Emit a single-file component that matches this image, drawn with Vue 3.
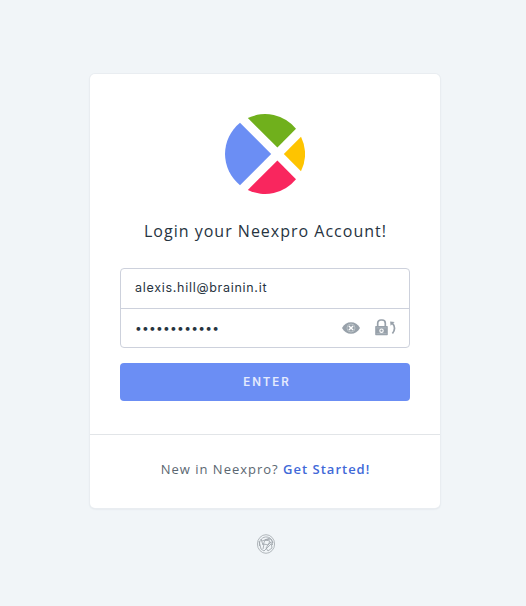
<script setup>
const email = 'alexis.hill@brainin.it'
const mask = '•'.repeat(12)
</script>

<template>
  <main class="page">
    <section class="card">
      <svg class="logo" viewBox="0 0 80 80" aria-hidden="true">
        <path fill="#6b8ef4" d="M15 8.8 46.2 40 15 71.2A40 40 0 0 1 15 8.8Z" />
        <path fill="#70b01c" d="M22.8 4A40 40 0 0 1 71 14.8L52.4 33.6Z" />
        <path fill="#fec400" d="M58.8 40 76 22.8A40 40 0 0 1 76 57.2Z" />
        <path fill="#f9265e" d="M52.4 46.4 71 65.2A40 40 0 0 1 22.8 76Z" />
      </svg>
      <h1 class="title">Login your Neexpro Account!</h1>
      <form class="form">
        <div class="fields">
          <div class="field"><span class="email">{{ email }}</span></div>
          <div class="field">
            <span class="mask">{{ mask }}</span>
            <svg class="eye" viewBox="0 0 18 12" aria-hidden="true">
              <path fill="#98a1aa" d="M0 6C2 2.2 5.2.2 9 .2S16 2.2 18 6C16 9.8 12.8 11.8 9 11.8S2 9.8 0 6Z" />
              <circle cx="9" cy="6" r="4" fill="none" stroke="#c3cace" stroke-width=".8" />
              <path d="m6.9 3.9 4.2 4.2m0-4.2-4.2 4.2" stroke="#fff" stroke-width="1.4" />
            </svg>
            <svg class="lock" viewBox="0 0 22 17" aria-hidden="true">
              <path d="M2.7 8V4.2a3.2 3.2 0 0 1 3.2-3.2h1.2a3.2 3.2 0 0 1 3.2 3.2V8" fill="none" stroke="#98a1aa" stroke-width="1.7" />
              <rect x=".2" y="7" width="12.6" height="9.2" rx=".7" fill="#98a1aa" />
              <path d="M1.5 8.9h10M1.5 14.6h10" stroke="#bbc3c9" stroke-width=".6" />
              <circle cx="6.5" cy="11.7" r="1.7" fill="#98a1aa" stroke="#fff" stroke-width="1.1" />
              <path d="M17.2 4.2c2.8 2.8 2.9 6.7.2 10.2" fill="none" stroke="#98a1aa" stroke-width="1.7" />
              <path d="m15.1 2.5 4.5.4-4 3.9Z" fill="#98a1aa" />
            </svg>
          </div>
        </div>
        <button class="enter" type="button">ENTER</button>
      </form>
      <footer class="footer">
        <span>New in Neexpro? <a class="link">Get Started!</a></span>
      </footer>
    </section>
    <svg class="emblem" viewBox="0 0 20 20" aria-hidden="true">
      <g fill="none" stroke="#9ba1a7" stroke-width=".8">
        <ellipse cx="10" cy="10" rx="8.6" ry="9.3" stroke="#a1a7ac" />
        <path d="M3.5 12C2.5 6 7 2.5 11 3s6 4 5.5 8M3 7 5 15l3 2M5 5l2 6 2-5 5 1-2 4-4-1-1 5M9 6l6-1 2 4M12 11l3-3 1 6-4 3-2-3 2-3M14 4 6 7M8 17l7-7" />
      </g>
    </svg>
  </main>
</template>

<style>
body {
  background: #f1f5f8;
}
</style>

<style scoped>
.page {
  box-sizing: border-box;
  width: 526px;
  height: 606px;
  padding: 74px 86px 0 90px;
  display: flex;
  flex-direction: column;
  align-items: center;
  font-family: "Open Sans", sans-serif;
  background: #f1f5f8;
}
.card {
  box-sizing: border-box;
  width: 350px;
  height: 434px;
  padding-top: 40px;
  display: flex;
  flex-direction: column;
  align-items: center;
  background: #fff;
  border-radius: 5px;
  box-shadow: 0 0 0 1px #e9edf1, 0 1px 2px #d5dade;
}
.logo {
  width: 80px;
  height: 80px;
}
.title {
  margin: 25px 0 0;
  padding-left: 1px;
  height: 24px;
  line-height: 24px;
  font-size: 16px;
  font-weight: 400;
  letter-spacing: 1px;
  color: #27343f;
  white-space: nowrap;
}
.form {
  width: 290px;
  margin-top: 25px;
}
.fields {
  box-sizing: border-box;
  height: 80px;
  border: 1px solid #cdd1dc;
  border-radius: 4px;
}
.field {
  box-sizing: border-box;
  height: 39px;
  padding: 0 12px 2px 14px;
  display: flex;
  align-items: center;
  font-family: Inter, sans-serif;
  color: #27343f;
}
.field:first-child {
  height: 40px;
  border-bottom: 1px solid #cdd1dc;
}
.email {
  font-size: 12.5px;
  letter-spacing: 0.71px;
}
.mask {
  flex: 1;
  font-size: 12px;
  letter-spacing: 0.27px;
}
.eye {
  width: 18px;
  height: 12px;
}
.lock {
  width: 22px;
  height: 17px;
  margin-left: 15px;
}
.enter {
  display: block;
  width: 290px;
  height: 38px;
  margin: 15px 0 0;
  padding: 0 0 0 4px;
  border: 0;
  border-radius: 4px;
  background: #6b8ef4;
  color: #e5ebfd;
  font: 600 11.5px Inter, sans-serif;
  letter-spacing: 1.9px;
}
.footer {
  box-sizing: border-box;
  width: 350px;
  height: 74px;
  margin-top: 33px;
  padding: 0 0 6px 1px;
  border-top: 1px solid #e2e5e8;
  display: flex;
  align-items: center;
  justify-content: center;
  font-size: 13px;
  letter-spacing: 1px;
  color: #5b6771;
}
.link {
  font-weight: 600;
  color: #4169d8;
}
.emblem {
  width: 20px;
  height: 20px;
  margin: 26px 0 0 1px;
}
</style>
